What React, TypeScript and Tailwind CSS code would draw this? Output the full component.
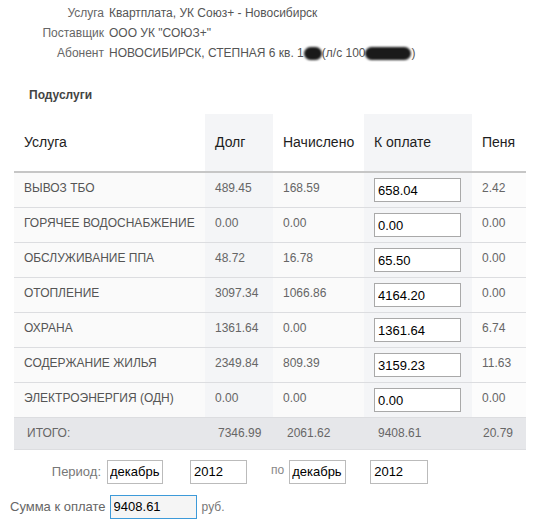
import React from 'react'

type Row = { name: string; debt: string; charged: string; pay: string; fine: string }

const ROWS: Row[] = [
  { name: 'ВЫВОЗ ТБО', debt: '489.45', charged: '168.59', pay: '658.04', fine: '2.42' },
  { name: 'ГОРЯЧЕЕ ВОДОСНАБЖЕНИЕ', debt: '0.00', charged: '0.00', pay: '0.00', fine: '0.00' },
  { name: 'ОБСЛУЖИВАНИЕ ППА', debt: '48.72', charged: '16.78', pay: '65.50', fine: '0.00' },
  { name: 'ОТОПЛЕНИЕ', debt: '3097.34', charged: '1066.86', pay: '4164.20', fine: '0.00' },
  { name: 'ОХРАНА', debt: '1361.64', charged: '0.00', pay: '1361.64', fine: '6.74' },
  { name: 'СОДЕРЖАНИЕ ЖИЛЬЯ', debt: '2349.84', charged: '809.39', pay: '3159.23', fine: '11.63' },
  { name: 'ЭЛЕКТРОЭНЕРГИЯ (ОДН)', debt: '0.00', charged: '0.00', pay: '0.00', fine: '0.00' },
]

const font = { fontFamily: '"Liberation Sans", Arial, sans-serif' }

function InfoLine({ label, children }: { label: string; children: React.ReactNode }) {
  return (
    <div className="flex h-5 items-center text-[12px]">
      <div className="w-[104px] text-right text-[#666]">{label}</div>
      <div className="ml-[5px] flex items-center text-[#555]">{children}</div>
    </div>
  )
}

function Blob({ w }: { w: number }) {
  return <span className="inline-block h-[13px] rounded-full bg-[#1a1a1a] blur-[1px]" style={{ width: w }} />
}

export default function App() {
  return (
    <div className="w-[535px] h-[523px] bg-white overflow-hidden" style={font}>
      <div className="pt-[3px]">
        <InfoLine label="Услуга">Квартплата, УК Союз+ - Новосибирск</InfoLine>
        <InfoLine label="Поставщик">ООО УК "СОЮЗ+"</InfoLine>
        <InfoLine label="Абонент">
          НОВОСИБИРСК, СТЕПНАЯ 6 кв.&nbsp;1<Blob w={18} />(л/с 100<Blob w={46} />)
        </InfoLine>
      </div>

      <div className="mt-[25px] ml-[29px] h-[14px] text-[12px] font-bold leading-[14px] text-[#444]">Подуслуги</div>

      <table className="ml-[14px] mt-[12px] w-[512px] table-fixed border-collapse">
        <colgroup>
          <col className="w-[191px]" />
          <col className="w-[68px]" />
          <col className="w-[91px]" />
          <col className="w-[108px]" />
          <col className="w-[54px]" />
        </colgroup>
        <thead>
          <tr className="h-[58px] border-b-[2px] border-[#c6c6c6] text-left text-[14px] font-normal text-[#1e1e1e]">
            <th className="pl-[10px] font-normal">Услуга</th>
            <th className="bg-[#f4f5f7] pl-[10px] font-normal">Долг</th>
            <th className="pl-[10px] font-normal">Начислено</th>
            <th className="bg-[#f4f5f7] pl-[10px] font-normal">К оплате</th>
            <th className="pl-[10px] font-normal">Пеня</th>
          </tr>
        </thead>
        <tbody>
          {ROWS.map(r => (
            <tr key={r.name} className="h-[35px] border-b border-[#dcdde0] text-[12px] text-[#666]">
              <td className="bg-[#fafafa] pl-[10px] pb-[4px] text-[#555]">{r.name}</td>
              <td className="bg-[#f4f5f7] pl-[10px] pb-[4px]">{r.debt}</td>
              <td className="bg-[#fafafa] pl-[10px] pb-[4px]">{r.charged}</td>
              <td className="bg-[#f4f5f7] pl-[10px]">
                <input
                  readOnly
                  value={r.pay}
                  className="h-[24px] w-[87px] border border-[#a9a9a9] bg-white px-[3px] pt-[2px] text-[13px] text-black outline-none"
                />
              </td>
              <td className="bg-[#fcfcfc] pl-[10px] pb-[4px]">{r.fine}</td>
            </tr>
          ))}
          <tr className="h-[32px] border-b border-[#dcdde0] bg-[#e6e7ea] text-[12px] text-[#666]">
            <td className="pl-[13px]">ИТОГО:</td>
            <td className="pl-[13px]">7346.99</td>
            <td className="pl-[14px]">2061.62</td>
            <td className="pl-[14px]">9408.61</td>
            <td className="pl-[11px]">20.79</td>
          </tr>
        </tbody>
      </table>

      <div className="mt-[10px] flex h-[24px] items-center text-[13px]">
        <div className="w-[101px] text-right text-[#777]">Период:</div>
        <input readOnly value="декабрь" className="ml-[6px] h-[24px] w-[56px] border border-[#bbb] px-[2px] text-[13px] text-black outline-none" />
        <input readOnly value="2012" className="ml-[27px] h-[24px] w-[57px] border border-[#bbb] px-[3px] text-[13px] text-black outline-none" />
        <div className="ml-[24px] text-[12px] text-[#888] -mt-[4px]">по</div>
        <input readOnly value="декабрь" className="ml-[5px] h-[24px] w-[57px] border border-[#bbb] px-[2px] text-[13px] text-black outline-none" />
        <input readOnly value="2012" className="ml-[24px] h-[24px] w-[58px] border border-[#bbb] px-[3px] text-[13px] text-black outline-none" />
      </div>

      <div className="mt-[11px] flex h-[24px] items-center text-[13px]">
        <div className="ml-[10px] text-[#666]">Сумма к оплате</div>
        <input readOnly value="9408.61" className="ml-[4px] h-[24px] w-[87px] border border-[#3d9ad9] bg-[#f5f5f5] px-[3px] text-[13px] text-black outline-none" />
        <div className="ml-[5px] text-[12px] text-[#777]">руб.</div>
      </div>
    </div>
  )
}
